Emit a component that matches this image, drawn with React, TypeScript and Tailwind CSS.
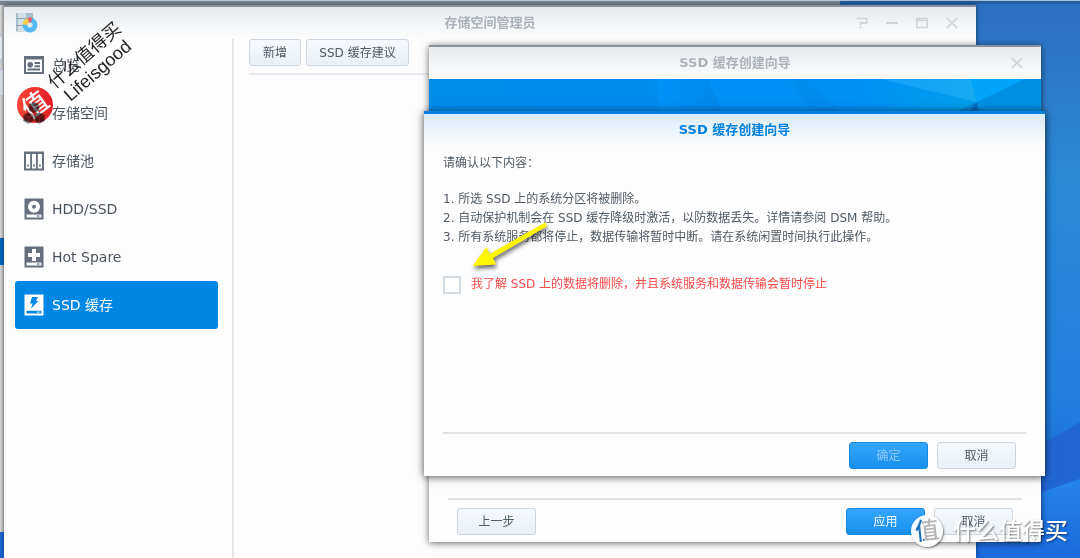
import React, { useState } from 'react';
import clsx from 'clsx';

const NAV_ITEMS = [
  { id: 'overview', label: '总览', Icon: OverviewIcon },
  { id: 'volume', label: '存储空间', Icon: VolumeIcon },
  { id: 'pool', label: '存储池', Icon: PoolIcon },
  { id: 'hdd', label: 'HDD/SSD', Icon: DiskIcon },
  { id: 'spare', label: 'Hot Spare', Icon: SpareIcon },
  { id: 'cache', label: 'SSD 缓存', Icon: CacheIcon },
];

function OverviewIcon() {
  return (
    <svg width="22" height="22" viewBox="0 0 22 22" fill="currentColor" aria-hidden="true">
      <path fillRule="evenodd" d="M1 2h20v18H1zM3 5.5v12.5h16V5.5z" />
      <circle cx="7.2" cy="10.8" r="2.8" />
      <path d="M11.5 8h5.5v2h-5.5zM11.5 11.3h5.5v2h-5.5zM4.5 14.6h12.5v1.8H4.5z" />
    </svg>
  );
}

function VolumeIcon() {
  return (
    <svg width="22" height="22" viewBox="0 0 22 22" aria-hidden="true">
      <g fill="#5a646e" stroke="#a4abb2" strokeWidth=".7">
        <path d="M11 0l5 2.5v6L11 11 6 8.500v-6z" />
        <path d="M5.500 10.500l5 2.500v6l-5 2.500-5-2.500v-6z" />
        <path d="M16.500 10.500l5 2.500v6l-5 2.500-5-2.500v-6z" />
        <path fill="none" d="M6 2.500L11 5l5-2.500M11 5v6M.5 13l5 2.500 5-2.500M5.500 15.500v6M11.500 13l5 2.500 5-2.500M16.500 15.500v6" />
      </g>
    </svg>
  );
}

function PoolIcon() {
  return (
    <svg width="22" height="22" viewBox="0 0 22 22" fill="currentColor" aria-hidden="true">
      <path fillRule="evenodd" d="M1 1.500h20v19H1zM3 4v14.500h4.200V4zM9 4v14.500h4V4zM14.800 4v14.500H19V4z" />
      <path d="M4.300 14.500h1.700v2H4.300zM10.200 14.500h1.700v2h-1.700zM16.100 14.500h1.700v2h-1.700z" />
    </svg>
  );
}

function DiskBase({ children }: { children: React.ReactNode }) {
  return (
    <svg width="22" height="22" viewBox="0 0 22 22" fill="currentColor" aria-hidden="true">
      <path fillRule="evenodd" d="M1.500.5h19v21h-19zM3.500 16.500v3h15v-3z" />
      <path d="M14 17.200h1.500v1.500H14zM16.500 17.200h.8v1.500h-.8z" />
      {children}
    </svg>
  );
}

function DiskIcon() {
  return (
    <DiskBase>
      <circle cx="11" cy="8.700" r="6" fill="#fff" />
      <circle cx="11" cy="8.700" r="2" />
    </DiskBase>
  );
}

function SpareIcon() {
  return (
    <DiskBase>
      <path fill="#fff" d="M9 3h4v4h4v4h-4v4H9v-4H5V7h4z" />
    </DiskBase>
  );
}

function CacheIcon() {
  return (
    <svg width="22" height="22" viewBox="0 0 22 22" aria-hidden="true">
      <path fill="#fff" d="M1.500.5h19v21h-19z" />
      <path fill="#0086e5" d="M9 3h6l-2 4h2.500L8 14.500l1.700-5H7zM3.500 16.800h15v2.700h-15z" />
      <path fill="#fff" d="M14 17.400h1.500v1.300H14zM16.500 17.400h.8v1.300h-.8z" />
    </svg>
  );
}

function AppIcon() {
  return (
    <svg width="22" height="22" viewBox="0 0 22 22" aria-hidden="true">
      <path fill="#a9bdcb" d="M0 1h17v18.500H0z" />
      <path fill="#d3dfe7" d="M2 1h8v18.500H2z" />
      <path stroke="#8fa4b2" d="M0 6.500h17M0 13.500h17" />
      <circle cx="14" cy="13" r="7.500" fill="#56b8f2" />
      <path fill="#f7cf45" d="M14 13L6.500 12.500a7.500 7.500 0 0 1 5-6.500z" />
      <path fill="#ea5f63" d="M14 13L11.500 6a7.500 7.500 0 0 1 5-.3z" />
      <circle cx="14" cy="13" r="2.600" fill="#dcebf5" />
    </svg>
  );
}

function CloseGlyph() {
  return (
    <svg width="12" height="12" viewBox="0 0 12 12" fill="none" stroke="currentColor" strokeWidth="1.700" aria-hidden="true">
      <path d="M.8 1l10.400 10M11.200 1L.8 11" />
    </svg>
  );
}

function Button({ children, primary, className, ...props }: React.ButtonHTMLAttributes<HTMLButtonElement> & { primary?: boolean }) {
  return (
    <button
      type="button"
      className={clsx(
        'h-[27px] rounded-[3px] border bg-linear-to-b text-xs',
        primary
          ? 'border-[#1b8be0] from-[#33a5fb] to-[#1690ec] text-white disabled:text-[#8fcbfa]'
          : 'border-[#cbd6e1] from-[#f5f9fd] to-[#eaf0f5] text-[#505a64]',
        className,
      )}
      {...props}
    >
      {children}
    </button>
  );
}

function Banner() {
  return (
    <svg className="block h-20 w-full" viewBox="0 0 612 80" preserveAspectRatio="none" aria-hidden="true">
      <defs>
        <linearGradient id="banner" x1="0" x2="1" y1="0" y2="0">
          <stop offset="0" stopColor="#008cec" />
          <stop offset=".4" stopColor="#008cf0" />
          <stop offset=".7" stopColor="#0090f6" />
          <stop offset=".92" stopColor="#00a0ea" />
        </linearGradient>
        <linearGradient id="facet" x1="0" x2="1" y1="0" y2="0">
          <stop offset="0" stopColor="#14a0f8" />
          <stop offset="1" stopColor="#16aaf0" />
        </linearGradient>
        <linearGradient id="fold" x1="0" x2="1" y1="0" y2="0">
          <stop offset="0" stopColor="#0092fa" />
          <stop offset="1" stopColor="#0087ea" />
        </linearGradient>
      </defs>
      <rect width="612" height="80" fill="url(#banner)" />
      <path fill="url(#fold)" d="M228 0h50l24 50h-70z" />
      <path fill="#0090f8" d="M278 0h82l28 50h-86z" />
      <path fill="#008bee" d="M362 0h10l64 50h-44z" />
      <path fill="url(#facet)" d="M452 0h90l6 23z" />
      <path fill="#00a4fa" d="M542 0h54l-48 23z" />
      <path fill="#0090e2" d="M596 0h16v80h-40l-24-57z" />
      <path fill="#0085d4" d="M548 23l-36 17v40h60z" />
      <path fill="#0068bd" d="M548 23l-14 17v40h20z" />
    </svg>
  );
}

function Wallpaper() {
  return (
    <svg className="absolute inset-0 h-full w-full" viewBox="0 0 1080 558" preserveAspectRatio="none" aria-hidden="true">
      <defs>
        <linearGradient id="sky" x1="0" x2="0" y1="0" y2="1">
          <stop offset="0" stopColor="#2c6fc2" />
          <stop offset=".15" stopColor="#2d7cca" />
          <stop offset=".32" stopColor="#2a8ad8" />
          <stop offset=".7" stopColor="#2180e0" />
          <stop offset="1" stopColor="#1c66d6" />
        </linearGradient>
        <linearGradient id="ray" x1="0" x2="0" y1="0" y2="1">
          <stop offset="0" stopColor="#2485ea" />
          <stop offset="1" stopColor="#1c6ade" />
        </linearGradient>
      </defs>
      <rect width="1080" height="558" fill="url(#sky)" />
      <path fill="#2167d4" d="M1040 445l40-23v60l-40 15z" />
      <path fill="url(#ray)" d="M960 520l120-41v79H960z" />
      <rect width="1080" height="1" fill="#a9c3dc" />
      <rect y="1" width="1080" height="3" fill="#235d9f" />
    </svg>
  );
}

// Window left open underneath, only its edges stick out
function RearWindow() {
  return (
    <div className="absolute top-0 right-[240px] left-0 h-[530px] border-t border-b-2 border-t-[#bccbda] border-b-[#f0f0f0] bg-[#7d8791] shadow">
      <div className="mt-1 flex h-full w-1 flex-col bg-linear-to-r from-[#e2e2e2] to-[#bdbdbd]">
        <div className="mt-[30px] h-[26px] w-[3px] rounded-r border border-l-0 border-[#bcc8d4] bg-[#edf3f8]" />
        <div className="mt-2 h-[27px] w-[3px] border-y border-[#c5d2de] bg-[#dfe9f3]" />
        <div className="mt-[142px] h-[27px] bg-[#0069c8]" />
      </div>
    </div>
  );
}

function StorageManager() {
  const [active, setActive] = useState('cache');

  return (
    <section className="absolute top-[5px] right-[104px] bottom-0 left-1 flex flex-col border-t-2 border-[#87919b] bg-[#fdfdfd] shadow-[0_0_5px_rgba(0,0,0,0.5)]">
      <header className="flex h-8 shrink-0 items-center bg-linear-to-b from-[#e6eaee] to-[#fdfdfd] px-3">
        <div className="flex-1"><AppIcon /></div>
        <h1 className="text-[13px] font-bold text-[#abb2b9]">存储空间管理员</h1>
        <div className="flex flex-1 justify-end gap-[6px] text-[#d0d4d8]">
          <button type="button" aria-label="帮助" className="flex size-6 items-center justify-center">
            <svg width="12" height="12" viewBox="0 0 12 12" fill="none" stroke="currentColor" strokeWidth="1.700" aria-hidden="true">
              <path d="M.5 1.500h10.200v4.300H4.500v2.200M4.500 9.300v1.900" />
            </svg>
          </button>
          <button type="button" aria-label="最小化" className="flex size-6 items-center justify-center">
            <svg width="12" height="12" viewBox="0 0 12 12" aria-hidden="true"><path fill="currentColor" d="M0 5h12v2H0z" /></svg>
          </button>
          <button type="button" aria-label="最大化" className="flex size-6 items-center justify-center">
            <svg width="12" height="12" viewBox="0 0 12 12" fill="none" stroke="currentColor" strokeWidth="1.500" aria-hidden="true">
              <path d="M.8 1.500h10.400v9H.8zM.8 3.500h10.400" />
            </svg>
          </button>
          <button type="button" aria-label="关闭" className="flex size-6 items-center justify-center"><CloseGlyph /></button>
        </div>
      </header>

      <div className="flex flex-1">
        <nav className="w-[230px] shrink-0 border-r-2 border-[#e2e4e7] py-[2px] pr-[14px] pl-[11px]">
          {NAV_ITEMS.map(({ id, label, Icon }) => (
            <button
              key={id}
              type="button"
              onClick={() => setActive(id)}
              className={clsx(
                'flex h-12 w-full items-center gap-[7px] rounded-[3px] px-2 text-left text-sm',
                active === id ? 'bg-[#0086e5] text-white' : 'text-[#65707c]',
              )}
            >
              <Icon />
              <span className={active === id ? 'text-white' : 'text-[#4a545e]'}>{label}</span>
            </button>
          ))}
        </nav>
        <main className="flex-1 pl-[15px]">
          <div className="flex gap-[5px] border-b-2 border-[#e6ebf1] pb-[7px]">
            <Button className="w-[52px]">新增</Button>
            <Button className="w-[103px]">SSD 缓存建议</Button>
          </div>
        </main>
      </div>
    </section>
  );
}

function WizardWindow() {
  return (
    <section className="absolute top-[45px] right-[39px] left-[429px] flex h-[497px] flex-col border-t-2 border-[#87919b] bg-[#fdfdfd] shadow-[0_1px_7px_rgba(0,0,0,0.6)]">
      <header className="flex h-8 shrink-0 items-center bg-linear-to-b from-[#e6eaee] to-[#fdfdfd] px-3">
        <div className="flex-1" />
        <h2 className="text-[13px] font-bold text-[#abb2b9]">SSD 缓存创建向导</h2>
        <div className="flex flex-1 justify-end text-[#d0d4d8]">
          <button type="button" aria-label="关闭" className="flex size-6 items-center justify-center"><CloseGlyph /></button>
        </div>
      </header>
      <Banner />
      <footer className="mx-[19px] mt-auto flex gap-[9px] border-t-2 border-[#e2e3e5] px-[9px] pt-2 pb-[7px]">
        <Button className="mr-auto w-[79px]">上一步</Button>
        <Button primary className="w-[79px]">应用</Button>
        <Button className="w-[79px]">取消</Button>
      </footer>
    </section>
  );
}

function ConfirmDialog() {
  const [checked, setChecked] = useState(false);

  return (
    <section role="dialog" aria-labelledby="confirm-title" className="absolute top-[111px] right-[35px] left-[424px] flex h-[365px] flex-col border-t-[3px] border-[#0083e2] bg-[#fdfdfd] text-xs text-[#505a64] shadow-[0_1px_8px_rgba(0,0,0,0.7)]">
      <header className="flex h-8 shrink-0 items-center justify-center bg-linear-to-b from-[#d9ebf9] to-[#fdfdfd]">
        <h2 id="confirm-title" className="text-[13px] font-bold text-[#0080e0]">SSD 缓存创建向导</h2>
      </header>
      <div className="px-[19px] pt-2 leading-[19px]">
        <p>请确认以下内容：</p>
        <ol className="mt-[17px]">
          <li>1. 所选 SSD 上的系统分区将被删除。</li>
          <li>2. 自动保护机制会在 SSD 缓存降级时激活，以防数据丢失。详情请参阅 DSM 帮助。</li>
          <li>3. 所有系统服务都将停止，数据传输将暂时中断。请在系统闲置时间执行此操作。</li>
        </ol>
        <label className="mt-7 flex items-center gap-[10px] text-[#ff4a4a]">
          <input
            type="checkbox"
            checked={checked}
            onChange={e => setChecked(e.target.checked)}
            className="size-[18px] appearance-none border-2 border-[#d3dbe3] bg-white checked:bg-[#0086e5]"
          />
          我了解 SSD 上的数据将删除，并且系统服务和数据传输会暂时停止
        </label>
      </div>
      <footer className="mx-[19px] mt-auto flex justify-end gap-[9px] border-t-2 border-[#e2e3e5] px-[10px] pt-2 pb-[7px]">
        <Button primary disabled={!checked} className="w-[79px]">确定</Button>
        <Button className="w-[79px]">取消</Button>
      </footer>
    </section>
  );
}

function Arrow() {
  return (
    <svg className="pointer-events-none absolute top-[216px] left-[464px] drop-shadow-[1px_3px_2px_rgba(0,0,0,0.6)]" width="90" height="60" viewBox="0 0 90 60" aria-hidden="true">
      <path fill="#fff500" d="M81 6.500l2 3.700L29 42l3 6.500L8.500 50l14-19 3 7z" />
    </svg>
  );
}

function Watermarks() {
  return (
    <>
      <div className="pointer-events-none absolute top-[87px] left-[17px] flex size-9 items-center justify-center rounded-full bg-linear-to-r from-[#fb4436] to-[#e11d25] mix-blend-multiply">
        <span className="-rotate-[36deg] text-[26px] leading-none font-medium text-white">值</span>
      </div>
      <div className="pointer-events-none absolute top-[43px] left-[41px] w-[100px] -rotate-[41deg] text-center text-lg leading-5 text-[#222]">
        <p>什么值得买</p>
        <p className="font-['Liberation_Sans',sans-serif]">Lifeisgood</p>
      </div>
      <div className="pointer-events-none absolute right-3 bottom-[11px] flex items-center gap-[10px] text-[23px] leading-8 text-white">
        <span className="flex size-8 items-center justify-center rounded-full bg-white/95 shadow-[1px_1px_2px_rgba(0,0,0,0.5)]">
          <span className="-rotate-6 bg-linear-to-r from-[#1a72bd] from-35% to-[#b3b5b7] to-35% bg-clip-text text-2xl leading-8 font-medium text-transparent">值</span>
        </span>
        <span className="font-medium [text-shadow:1px_1px_2px_rgba(0,0,0,0.5)]">什么值得买</span>
      </div>
    </>
  );
}

export default function App() {
  return (
    <div className="relative h-screen overflow-hidden font-['DejaVu_Sans','Noto_Sans_CJK_SC',sans-serif]">
      <Wallpaper />
      <RearWindow />
      <StorageManager />
      <WizardWindow />
      <ConfirmDialog />
      <Arrow />
      <Watermarks />
    </div>
  );
}
